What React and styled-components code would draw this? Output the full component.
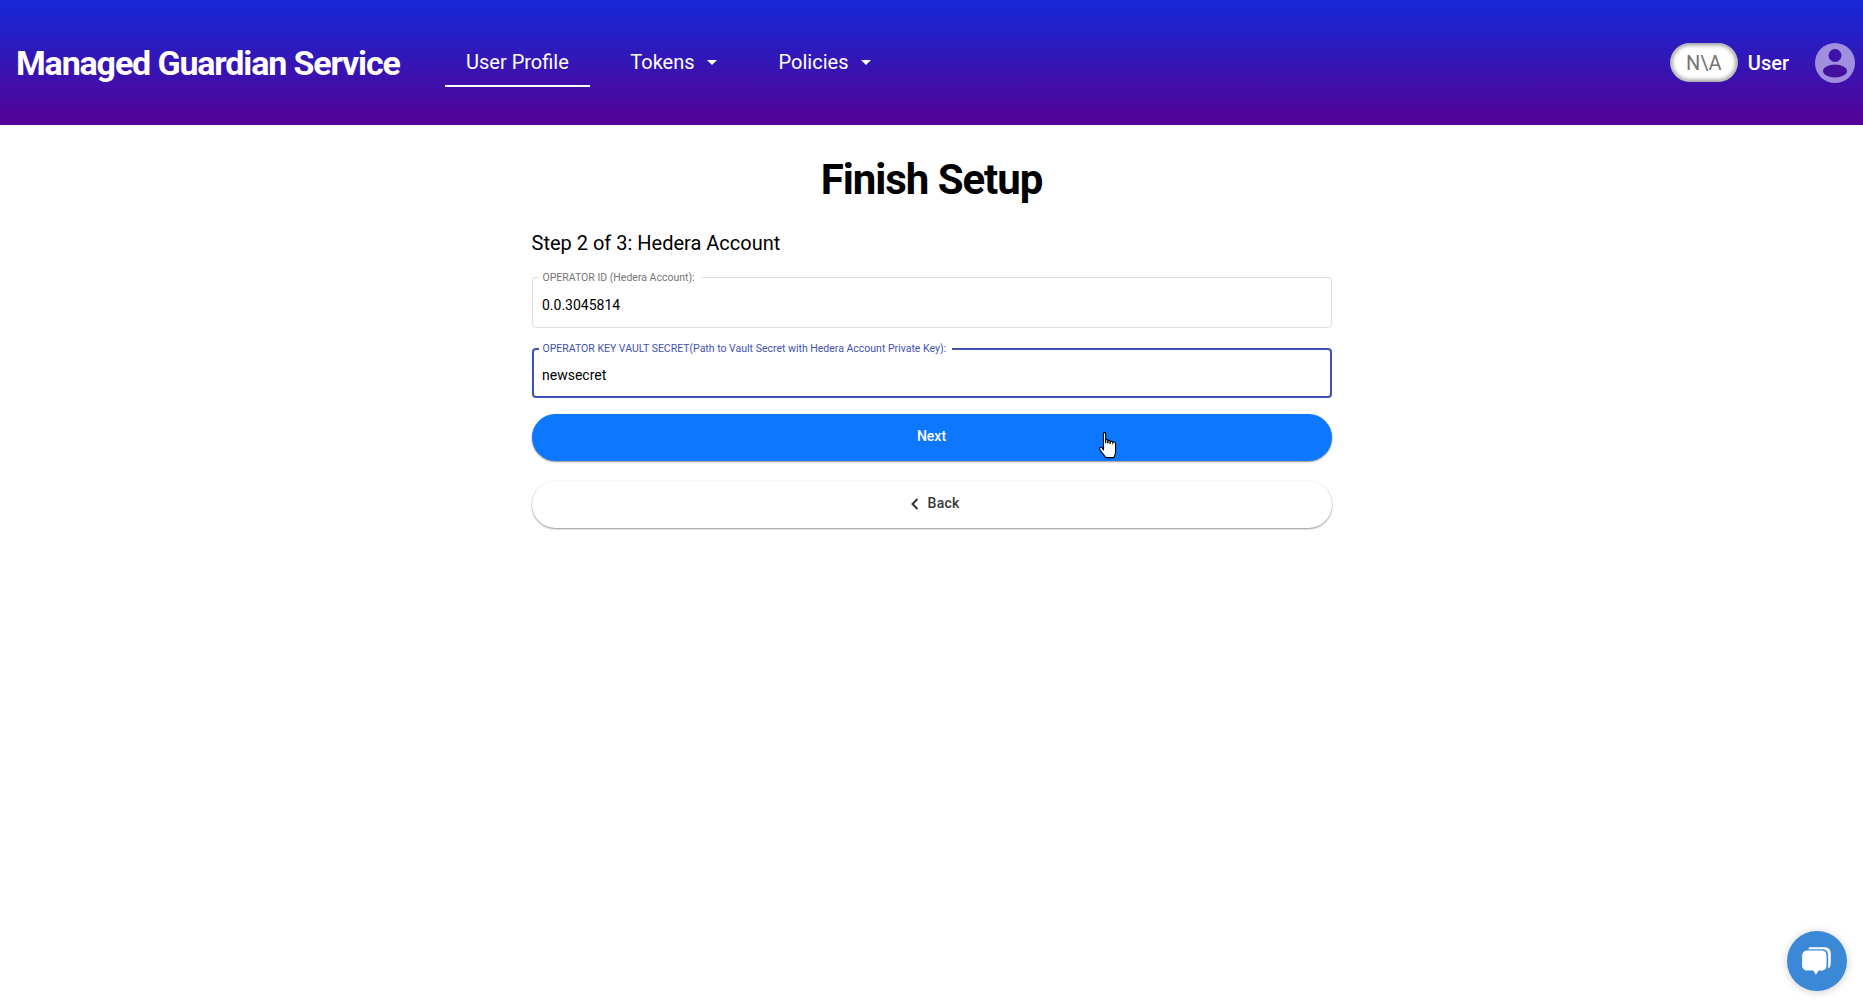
import React from "react";
import styled, { createGlobalStyle } from "styled-components";

const GlobalStyle = createGlobalStyle`
  html, body {
    margin: 0;
    padding: 0;
    background: #fff;
    font-family: Roboto, "Liberation Sans", sans-serif;
  }
`;

const Page = styled.div`
  min-height: 1007px;
  position: relative;
  overflow: hidden;
`;

const Header = styled.header`
  height: 125px;
  box-sizing: border-box;
  padding: 0 0 0 16px;
  display: flex;
  align-items: center;
  background: linear-gradient(180deg, #1627d8 0%, #2a1cc0 35%, #560094 100%);
  color: #fff;
`;

const Brand = styled.div`
  font-size: 34px;
  font-weight: 700;
  letter-spacing: -1.15px;
  width: 429px;
  flex: none;
  white-space: nowrap;
`;

const Nav = styled.nav`
  display: flex;
  align-items: stretch;
  height: 49px;
  flex: 1;
`;

const Tab = styled.div`
  display: flex;
  align-items: center;
  gap: 12.5px;
  box-sizing: border-box;
  padding: 0 21px;
  margin-right: 19.5px;
  font-size: 20px;
  border-bottom: 2px solid ${(p) => (p.$active ? "#fff" : "transparent")};
`;

const Caret = styled.span`
  width: 0;
  height: 0;
  border-left: 5px solid transparent;
  border-right: 5px solid transparent;
  border-top: 5px solid #fff;
  margin-top: 2px;
`;

const UserArea = styled.div`
  display: flex;
  align-items: center;
`;

const Badge = styled.div`
  width: 68px;
  height: 39px;
  box-sizing: border-box;
  border-radius: 20px;
  background: #fff;
  border: 1px solid #b0b0b0;
  box-shadow: inset 0 0 4px 1px #8f8f8f;
  display: flex;
  align-items: center;
  justify-content: center;
  font-size: 20px;
  color: #757575;
`;

const UserName = styled.div`
  font-size: 20px;
  font-weight: 500;
  margin-left: 10px;
  margin-right: 26px;
`;

const Avatar = styled.svg`
  width: 40px;
  height: 40px;
  margin-right: 8px;
  display: block;
`;

const Main = styled.main`
  width: 800px;
  margin: 0 auto;
`;

const Title = styled.h1`
  margin: 31px 0 0;
  height: 48px;
  line-height: 48px;
  font-size: 42px;
  font-weight: 700;
  letter-spacing: -1.05px;
  text-align: center;
  color: #000;
`;

const Step = styled.div`
  margin-top: 26px;
  height: 26px;
  line-height: 26px;
  font-size: 20px;
  color: #000;
`;

const Field = styled.fieldset`
  margin: ${(p) => (p.$focused ? "15px" : "16px")} 0 0;
  height: ${(p) => (p.$focused ? "55px" : "56px")};
  box-sizing: border-box;
  padding: 0 ${(p) => (p.$focused ? "8.5px" : "9.5px")};
  border: ${(p) => (p.$focused ? "2px solid #3f51b5" : "1px solid #dedede")};
  border-radius: 4px;
  min-width: 0;
`;

const Legend = styled.legend`
  font-size: 10.5px;
  line-height: 11px;
  padding: 0 6px 0 4px;
  margin-left: -3.5px;
  color: ${(p) => (p.$focused ? "#3f51b5" : "#757575")};
`;

const Input = styled.input`
  display: block;
  width: 100%;
  border: 0;
  outline: 0;
  padding: 0;
  margin-top: ${(p) => (p.$focused ? "11px" : "12px")};
  height: 20px;
  font-family: inherit;
  font-size: 14px;
  color: #000;
  background: transparent;
`;

const Button = styled.button`
  display: flex;
  align-items: center;
  justify-content: center;
  gap: ${(p) => (p.$primary ? "0" : "8px")};
  width: 100%;
  height: 47px;
  padding: 0 0 3px ${(p) => (p.$primary ? "0" : "6px")};
  border: 0;
  border-radius: 24px;
  font-family: inherit;
  font-size: 14px;
  font-weight: 500;
  letter-spacing: ${(p) => (p.$primary ? "0" : "0.2px")};
  margin-top: ${(p) => (p.$primary ? "16px" : "20px")};
  background: ${(p) => (p.$primary ? "#0d77ff" : "#fff")};
  color: ${(p) => (p.$primary ? "#fff" : "#3a3a3a")};
  box-shadow: 0 1px 2px rgba(0, 0, 0, 0.42), 0 0 1px rgba(0, 0, 0, 0.1);
`;

const Chevron = styled.svg`
  width: 10px;
  height: 14px;
  margin-top: 2px;
`;

const Cursor = styled.svg`
  position: absolute;
  left: 1098px;
  top: 431px;
  width: 22px;
  height: 29px;
`;

const Chat = styled.div`
  position: absolute;
  left: 1787px;
  top: 931px;
  width: 60px;
  height: 60px;
  border-radius: 50%;
  background: #3a88d6;
  box-shadow: 0 1px 8px rgba(0, 0, 0, 0.2);
  display: flex;
  align-items: center;
  justify-content: center;
`;

const ChatIcon = styled.svg`
  width: 34px;
  height: 34px;
`;

export default function App() {
  return (
    <Page>
      <GlobalStyle />
      <Header>
        <Brand>Managed Guardian Service</Brand>
        <Nav>
          <Tab $active>User Profile</Tab>
          <Tab>
            Tokens <Caret />
          </Tab>
          <Tab>
            Policies <Caret />
          </Tab>
        </Nav>
        <UserArea>
          <Badge>N\A</Badge>
          <UserName>User</UserName>
          <Avatar viewBox="0 0 40 40">
            <circle cx="20" cy="20" r="20" fill="#a08fdc" />
            <circle cx="20" cy="12.5" r="6.5" fill="#3d12ab" />
            <ellipse cx="20" cy="28" rx="12" ry="6.5" fill="#43109f" />
          </Avatar>
        </UserArea>
      </Header>
      <Main>
        <Title>Finish Setup</Title>
        <Step>Step 2 of 3: Hedera Account</Step>
        <Field>
          <Legend>OPERATOR ID (Hedera Account):</Legend>
          <Input readOnly value="0.0.3045814" />
        </Field>
        <Field $focused>
          <Legend $focused>
            OPERATOR KEY VAULT SECRET(Path to Vault Secret with Hedera Account Private Key):
          </Legend>
          <Input $focused readOnly value="newsecret" />
        </Field>
        <Button $primary>Next</Button>
        <Button>
          <Chevron viewBox="0 0 10 14">
            <path d="M7.5 2 L2.5 7 L7.5 12" fill="none" stroke="#333" strokeWidth="2" />
          </Chevron>
          Back
        </Button>
      </Main>
      <Cursor viewBox="0 0 20 26">
        <path
          d="M5 2 C5 0.8 7 0.8 7 2 V10 V8 C7 7 9 7 9 8 V10.5 V9 C9 8 11 8 11 9 V11 V10 C11 9 13.5 9 13.5 10 C15 9.5 16 10.5 16 11.5 V18 C16 21 15 22.5 14.5 24 H7 C6 22 3.5 20 1.5 16.5 C1 15 2.5 14 3.5 15 L5 17 Z"
          fill="#fff"
          stroke="#000"
          strokeWidth="1"
          strokeLinejoin="round"
        />
        <path d="M7 7 V11 M9 8 V11 M11 9 V11.5 M13.5 10 V12" stroke="#000" strokeWidth="0.8" fill="none" />
      </Cursor>
      <Chat>
        <ChatIcon viewBox="0 0 32 32">
          <path
            d="M9 3 H23 C27 3 29 5.5 29 9 V18 C29 20.5 28 22 26.5 23 V10 C26 7 24.5 5 21 5 H8 C8 4 8.5 3 9 3 Z"
            fill="#fff"
          />
          <path
            d="M7 6 H20 C23.5 6 25 8 25 11 V20 C25 23.5 23 25 20 25 H17.5 L15 29 L12.5 25 H7 C4 25 2 23.5 2 20 V11 C2 8 4 6 7 6 Z"
            fill="#fff"
          />
        </ChatIcon>
      </Chat>
    </Page>
  );
}
